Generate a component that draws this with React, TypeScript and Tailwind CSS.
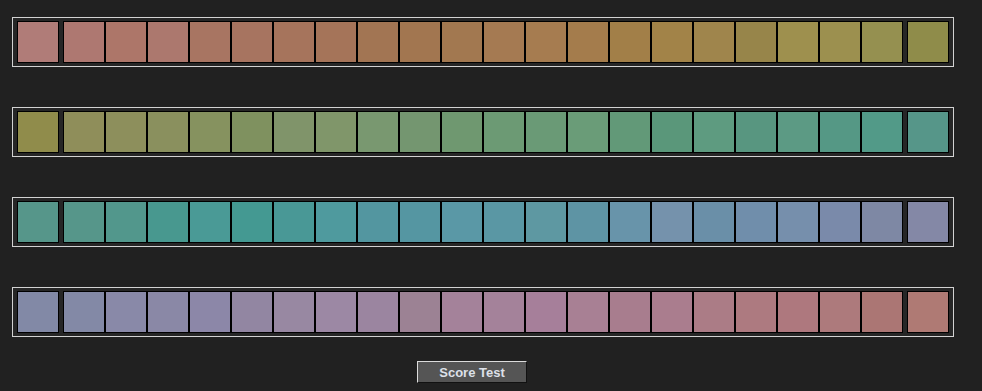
const rows: string[][] = [
  [
    '#b07c78',
    '#ae7871', '#ad7669', '#ac786e', '#a87562', '#a77460', '#a6745c', '#a57459', '#a27553', '#a27650', '#a27850',
    '#a57a52', '#a67c50', '#a47c4c', '#a27f48', '#a28348', '#9f854c', '#97854a', '#9e904e', '#9c904f', '#959050',
    '#8f8c4a',
  ],
  [
    '#908c4b',
    '#8f8e5a', '#8d8f5c', '#8a905e', '#86925f', '#7f915f', '#80946a', '#80966a', '#799870', '#749670', '#6f9870',
    '#6c9a74', '#6a9a76', '#6a9c78', '#629978', '#5a977a', '#5e9b80', '#589680', '#5c9a84', '#559885', '#529a88',
    '#569689',
  ],
  [
    '#56968a',
    '#56968a', '#52978c', '#48988f', '#4a9a96', '#449992', '#499896', '#4f9a9e', '#5396a0', '#5596a2', '#5a98a6',
    '#5a97a4', '#5e98a2', '#5e94a4', '#6894aa', '#7592ac', '#6a8fa8', '#708eab', '#768fac', '#7a8aaa', '#7e88a4',
    '#8488a6',
  ],
  [
    '#8289a6',
    '#8389a6', '#8989a8', '#8a88a6', '#8c87a8', '#9286a2', '#9888a2', '#9c88a4', '#9b85a0', '#9c8294', '#a4829a',
    '#a4829a', '#a67f9a', '#a88094', '#a87d8e', '#aa7d8e', '#ab7c86', '#ad7a80', '#ae787e', '#ad7a7c', '#ab7674',
    '#af7a74',
  ],
]

function Chip({ color }: { color: string }) {
  return <div className="w-[42px] h-[42px] border border-black shrink-0" style={{ backgroundColor: color }} />
}

function Tray({ colors }: { colors: string[] }) {
  const first = colors[0]
  const last = colors[colors.length - 1]
  const middle = colors.slice(1, -1)
  return (
    <div className="w-[942px] h-[50px] border border-[#d2d2d2] bg-[#262626] pt-[3px] px-[4px] flex gap-[4px]">
      <Chip color={first} />
      <div className="flex">
        {middle.map((c, i) => (
          <Chip key={i} color={c} />
        ))}
      </div>
      <Chip color={last} />
    </div>
  )
}

export default function App() {
  return (
    <div className="w-[982px] h-[391px] bg-[#212121] pt-[17px] pl-[12px] flex flex-col">
      <div className="flex flex-col gap-[40px]">
        {rows.map((r, i) => (
          <Tray key={i} colors={r} />
        ))}
      </div>
      <div className="flex pt-[24px] pl-[405px]">
        <button
          className="w-[110px] h-[22px] bg-[#555555] border border-t-[#dcdcdc] border-l-[#dcdcdc] border-b-[#111111] border-r-[#111111] text-[#dde0e8] text-[13px] font-bold leading-none"
          style={{ fontFamily: '"Liberation Sans", Arial, sans-serif' }}
        >
          Score Test
        </button>
      </div>
    </div>
  )
}
